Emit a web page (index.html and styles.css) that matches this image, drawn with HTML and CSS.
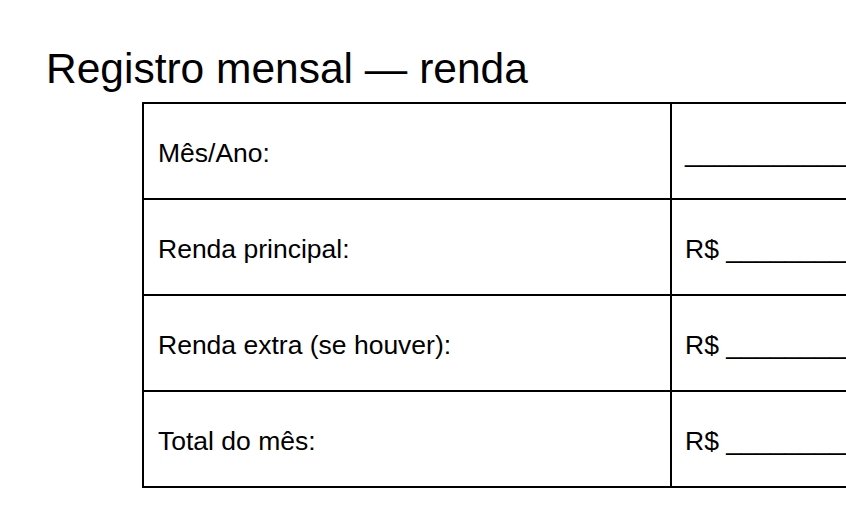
FILE: index.html
```html
<!DOCTYPE html>
<html lang="pt-BR">
<head>
<meta charset="utf-8">
<title>Registro mensal — renda</title>
<link rel="stylesheet" href="styles.css">
</head>
<body>
<main class="page">
  <h1 class="title">Registro mensal — renda</h1>
  <div class="sheet">
    <div class="cell label">Mês/Ano:</div>
    <div class="cell value">______________________</div>
    <div class="cell label">Renda principal:</div>
    <div class="cell value">R$ __________________</div>
    <div class="cell label">Renda extra (se houver):</div>
    <div class="cell value">R$ __________________</div>
    <div class="cell label">Total do mês:</div>
    <div class="cell value">R$ __________________</div>
  </div>
</main>
</body>
</html>
```
FILE: styles.css
```css
html, body {
  margin: 0;
  padding: 0;
  background: #fff;
  overflow: hidden;
}
body {
  font-family: "Liberation Sans", Arial, sans-serif;
  color: #000;
}
.page {
  padding: 40px 0 0 46px;
  width: 1000px;
}
.title {
  margin: 0;
  font-size: 42.5px;
  font-weight: 400;
  line-height: 58px;
  height: 62px;
}
.sheet {
  margin-left: 96px;
  display: grid;
  grid-template-columns: 528px 300px;
  grid-auto-rows: 96px;
  border-top: 2px solid #000;
  border-left: 2px solid #000;
  width: max-content;
}
.cell {
  border-right: 2px solid #000;
  border-bottom: 2px solid #000;
  display: flex;
  align-items: center;
  padding-top: 4px;
  box-sizing: border-box;
  font-size: 26.5px;
  white-space: nowrap;
  overflow: hidden;
}
.label {
  padding-left: 14px;
}
.value {
  padding-left: 13px;
}
```
